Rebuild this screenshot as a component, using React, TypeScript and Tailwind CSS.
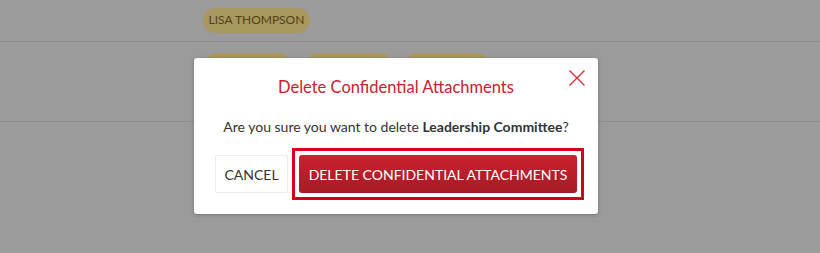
const font = { fontFamily: 'Lato, "Open Sans", sans-serif' };

function Pill({ name, w }: { name: string; w: string }) {
  return (
    <span className={`inline-flex items-center justify-center h-[25px] ${w} rounded-full bg-[#a8975f] text-[12px] text-[#4f4416]`}>
      {name}
    </span>
  );
}

export default function App() {
  return (
    <div className="relative w-[820px] h-[253px] overflow-hidden bg-[#9b9b9b]" style={font}>
      {/* page behind the overlay */}
      <div className="h-[42px] border-b border-[#8d8d8d] pl-[203px] pt-[6px]">
        <Pill name="LISA THOMPSON" w="w-[107px]" />
      </div>
      <div className="h-[80px] border-b border-[#8d8d8d] pl-[204px] pt-[11px] flex">
        <Pill name="" w="w-[87px]" />
        <span className="ml-[15px]"><Pill name="" w="w-[86px]" /></span>
        <span className="ml-[13px]"><Pill name="" w="w-[84px]" /></span>
      </div>

      {/* dialog */}
      <div className="absolute left-[194px] top-[58px] w-[404px] h-[156px] bg-white rounded-[3px] shadow-[0_1px_4px_rgba(0,0,0,0.25)] flex flex-col items-center px-[21px] pt-[19px]">
        <button className="absolute right-[13px] top-[12px] text-[#d42a36]">
          <svg width="16" height="16" viewBox="0 0 16 16" fill="none" stroke="currentColor" strokeWidth="1.3">
            <path d="M0.5 0.5L15.5 15.5M15.5 0.5L0.5 15.5" />
          </svg>
        </button>
        <h2 className="h-[20px] leading-[20px] text-[16.5px] text-[#c8202f]">Delete Confidential Attachments</h2>
        <p className="mt-[20px] h-[20px] leading-[20px] text-[14px] text-[#333]">
          Are you sure you want to delete <span className="font-bold">Leadership Committee</span>?
        </p>
        <div className="mt-[11px] -mr-[7px] w-[calc(100%+7px)] flex items-center gap-[4px]">
          <button className="w-[73px] h-[38px] border border-[#ececec] rounded-[2px] bg-white text-[14px] text-[#333]">
            CANCEL
          </button>
          <div className="flex-1 border-[3px] border-[#d0021b] p-[4px]">
            <button className="w-full h-[38px] rounded-[3px] bg-gradient-to-b from-[#cb222f] to-[#a51b25] text-white text-[14px]">
              DELETE CONFIDENTIAL ATTACHMENTS
            </button>
          </div>
        </div>
      </div>
    </div>
  );
}
